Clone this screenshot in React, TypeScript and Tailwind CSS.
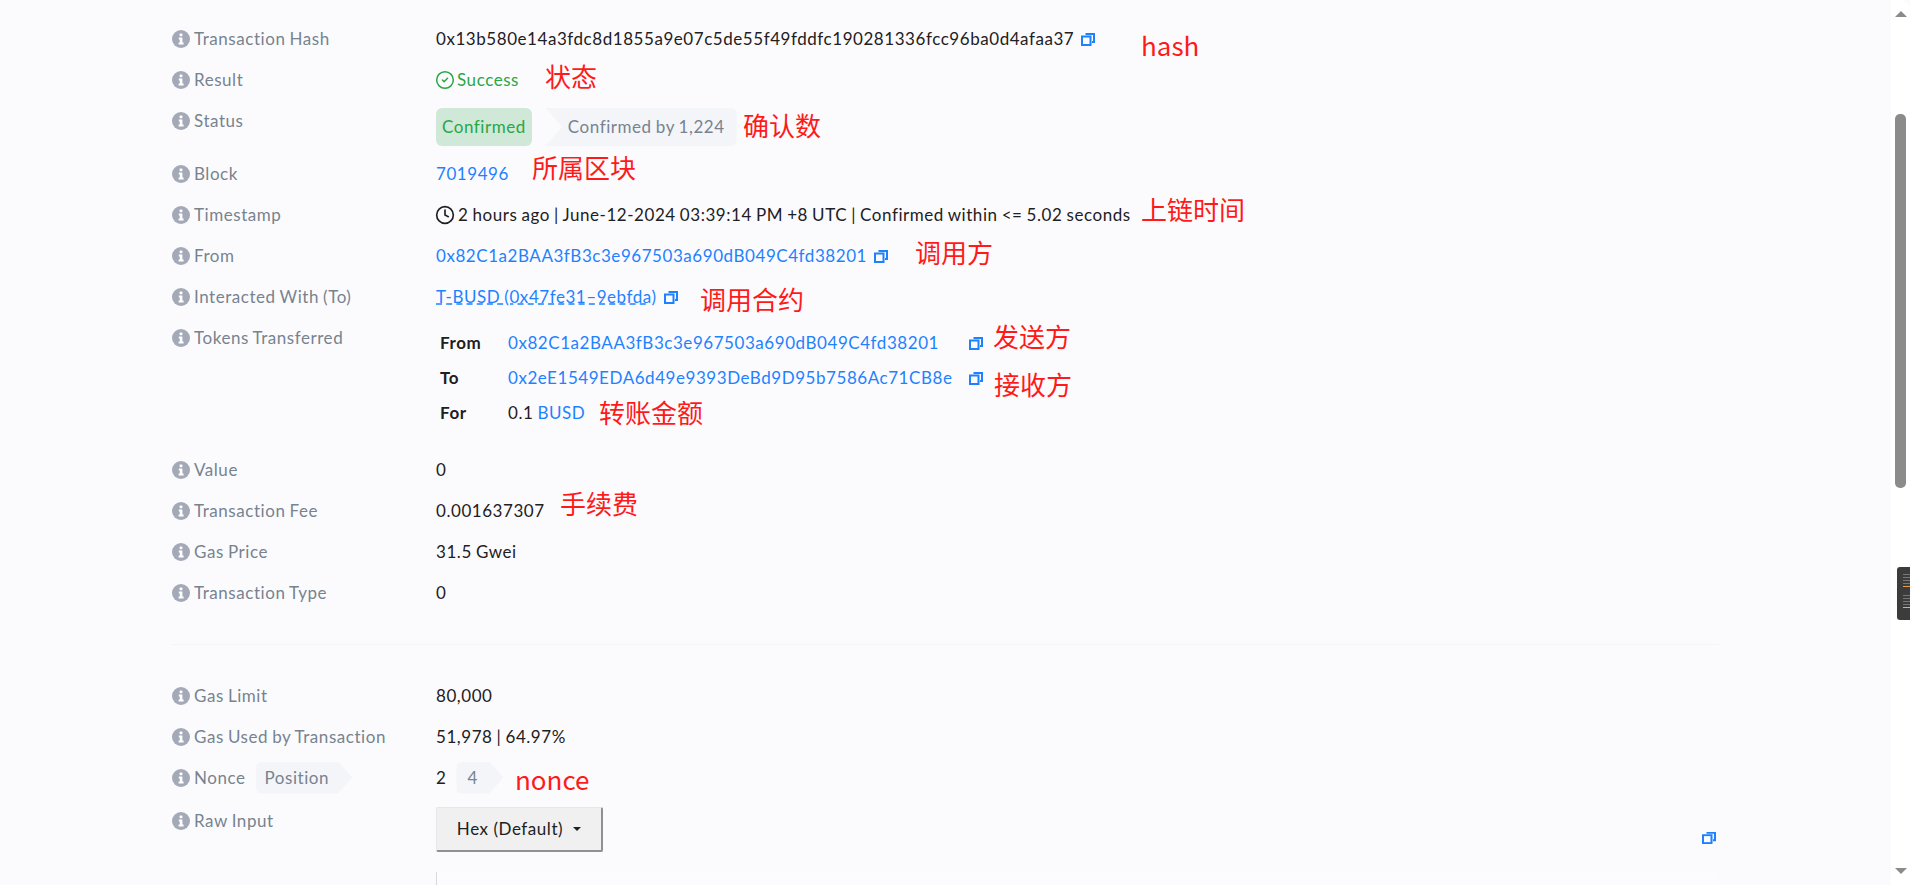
import { Clock, CircleCheck } from 'lucide-react'
import { ReactNode } from 'react'

const font = { fontFamily: 'Lato, "Noto Sans", sans-serif' }

function InfoIcon() {
  return (
    <svg viewBox="0 0 18 18" className="w-[18px] h-[18px] shrink-0">
      <circle cx="9" cy="9" r="9" fill="#a3a9b6" />
      <rect x="7.6" y="3.6" width="2.8" height="2.6" rx="0.6" fill="#fff" />
      <path d="M6.8 7.6h3.6v5h1.2v1.8H6.6v-1.8h1.2v-3.2h-1z" fill="#fff" />
    </svg>
  )
}

function CopyIcon({ className = 'w-[14px] h-[14px]' }: { className?: string }) {
  return (
    <svg viewBox="0 0 14 14" className={`${className} shrink-0`} fill="none" stroke="#1e82ff" strokeWidth="2" preserveAspectRatio="none">
      <path d="M4.5 2h8.5v8h-2" />
      <rect x="1" y="4.5" width="8.5" height="8.5" />
    </svg>
  )
}

function Row({ label, children, extra, className = 'h-[41px]' }: { label: string; children?: ReactNode; extra?: ReactNode; className?: string }) {
  return (
    <div className={`flex ${className}`}>
      <div className="w-[264px] h-[41px] flex items-center gap-[4px] text-[#77838f] shrink-0">
        <InfoIcon />
        <span>{label}</span>
        {extra}
      </div>
      <div className="flex-1 min-w-0">{children}</div>
    </div>
  )
}

function Value({ children }: { children: ReactNode }) {
  return <div className="h-[41px] flex items-center text-[#1e2022]">{children}</div>
}

function TokenRow({ label, children }: { label: string; children: ReactNode }) {
  return (
    <div className="flex items-center h-[35px] text-[#1e2022]">
      <span className="w-[72px] pl-[4px] font-bold">{label}</span>
      {children}
    </div>
  )
}

const notes = [
  { text: 'hash', cls: 'left-[1141px] top-[27px]' },
  { text: '状态', cls: 'left-[545px] top-[58px]' },
  { text: '确认数', cls: 'left-[743px] top-[107px]' },
  { text: '所属区块', cls: 'left-[532px] top-[149px]' },
  { text: '上链时间', cls: 'left-[1141px] top-[191px]' },
  { text: '调用方', cls: 'left-[915px] top-[234px]' },
  { text: '调用合约', cls: 'left-[700px] top-[281px]' },
  { text: '发送方', cls: 'left-[993px] top-[318px]' },
  { text: '接收方', cls: 'left-[994px] top-[366px]' },
  { text: '转账金额', cls: 'left-[599px] top-[394px]' },
  { text: '手续费', cls: 'left-[560px] top-[485px]' },
  { text: 'nonce', cls: 'left-[515px] top-[761px]' },
]

export default function App() {
  return (
    <div className="relative flex h-[885px] overflow-hidden bg-[#fbfbfe] text-[17px] tracking-[0.55px] [word-spacing:-0.8px]" style={font}>
      <main className="flex-1 min-w-0 pl-[172px] pr-[172px] pt-[18px]">
        <Row label="Transaction Hash">
          <Value>
            0x13b580e14a3fdc8d1855a9e07c5de55f49fddfc190281336fcc96ba0d4afaa37
            <span className="ml-[7px]"><CopyIcon /></span>
          </Value>
        </Row>
        <Row label="Result">
          <Value>
            <span className="flex items-center gap-[2px] -ml-[1px] text-[#28a745]">
              <CircleCheck className="w-[20px] h-[20px]" strokeWidth={1.8} />
              Success
            </span>
          </Value>
        </Row>
        <Row label="Status" className="h-[53px]">
          <div className="flex mt-[8px] h-[38px] items-center">
            <span className="h-full flex items-center px-[6px] rounded-[6px] bg-[#cfe8d8] text-[#28a745]">Confirmed</span>
            <span className="h-full ml-[14px] pl-[22px] pr-[12px] flex items-center rounded-r-[6px] bg-[#f4f5f9] text-[#77838f] [clip-path:polygon(0_0,100%_0,100%_100%,0_100%,16px_50%)]">Confirmed by 1,224</span>
          </div>
        </Row>
        <Row label="Block">
          <Value><a className="text-[#1e82ff]">7019496</a></Value>
        </Row>
        <Row label="Timestamp">
          <Value>
            <Clock className="w-[20px] h-[20px] mr-[3px] -ml-[1px]" strokeWidth={2} />
            2 hours ago | June-12-2024 03:39:14 PM +8 UTC | Confirmed within &lt;= 5.02 seconds
          </Value>
        </Row>
        <Row label="From">
          <Value>
            <a className="text-[#1e82ff]">0x82C1a2BAA3fB3c3e967503a690dB049C4fd38201</a>
            <span className="ml-[7px]"><CopyIcon /></span>
          </Value>
        </Row>
        <Row label="Interacted With (To)">
          <Value>
            <a className="text-[#1e82ff] underline decoration-dashed">T-BUSD (0x47fe31–9ebfda)</a>
            <span className="ml-[7px]"><CopyIcon /></span>
          </Value>
        </Row>
        <Row label="Tokens Transferred" className="h-[132px]">
          <div className="pt-[8px]">
            <TokenRow label="From">
              <a className="text-[#1e82ff] w-[461px]">0x82C1a2BAA3fB3c3e967503a690dB049C4fd38201</a>
              <CopyIcon />
            </TokenRow>
            <TokenRow label="To">
              <a className="text-[#1e82ff] w-[461px]">0x2eE1549EDA6d49e9393DeBd9D95b7586Ac71CB8e</a>
              <CopyIcon />
            </TokenRow>
            <TokenRow label="For">
              0.1&nbsp;<a className="text-[#1e82ff]">BUSD</a>
            </TokenRow>
          </div>
        </Row>
        <Row label="Value"><Value>0</Value></Row>
        <Row label="Transaction Fee"><Value>0.001637307</Value></Row>
        <Row label="Gas Price"><Value>31.5 Gwei</Value></Row>
        <Row label="Transaction Type"><Value>0</Value></Row>

        <hr className="mt-[31px] mb-[30px] border-t border-[#f3f4f7]" />

        <Row label="Gas Limit"><Value>80,000</Value></Row>
        <Row label="Gas Used by Transaction"><Value>51,978 | 64.97%</Value></Row>
        <Row
          label="Nonce"
          extra={
            <span className="ml-[6px] h-[32px] w-[97px] pl-[9px] flex items-center text-[#77838f] bg-[#f4f5f9] rounded-l-[6px] [clip-path:polygon(0_0,85%_0,100%_50%,85%_100%,0_100%)]">Position</span>
          }
        >
          <Value>
            2
            <span className="ml-[10px] h-[32px] w-[47px] pl-[11px] flex items-center text-[#77838f] bg-[#f4f5f9] rounded-l-[6px] [clip-path:polygon(0_0,70%_0,100%_50%,70%_100%,0_100%)]">4</span>
          </Value>
        </Row>
        <div className="mt-[2px]">
          <Row label="Raw Input" className="h-[90px]">
            <div className="flex justify-between items-end">
              <button className="mt-[7px] w-[167px] h-[45px] flex items-center justify-center gap-[10px] bg-[#f0f0f0] text-[#1e2022] border border-[#e4e6ec] border-r-2 border-b-2 border-r-[#8f9096] border-b-[#8f9096] rounded-[2px]">
                Hex (Default)
                <span className="w-0 h-0 border-x-[4px] border-x-transparent border-t-[4px] border-t-[#1e2022]" />
              </button>
              <CopyIcon className="w-[14px] h-[13px] mb-[8px] mr-[3px]" />
            </div>
            <div className="mt-[20px] h-[30px] border-l border-[#d5dae2] bg-[#fcfcfe]" />
          </Row>
        </div>
      </main>

      <aside className="w-[19px] shrink-0 bg-white flex flex-col items-center rounded-tr-[10px]">
        <span className="mt-[11px] w-0 h-0 border-x-[6px] border-x-transparent border-b-[6px] border-b-[#8b8b8b]" />
        <div className="mt-[97px] w-[11px] h-[374px] rounded-[5px] bg-[#8b8b8b]" />
        <div className="flex-1" />
        <span className="mb-[11px] w-0 h-0 border-x-[6px] border-x-transparent border-t-[6px] border-t-[#8b8b8b]" />
      </aside>

      {/* small dark widget sitting on the scrollbar */}
      <div className="absolute left-[1897px] top-[567px] w-[13px] h-[53px] rounded-l-[3px] bg-[#3c3c3c] flex flex-col gap-[2px] pl-[6px] pt-[7px]">
        <span className="h-[1px] bg-[#777]" />
        <span className="h-[1px] bg-[#777]" />
        <span className="h-[1px] bg-[#777]" />
        <span className="h-[1px] bg-[#777]" />
        <span className="h-[1px] bg-[#e8a04c]" />
        <span className="h-[1px] mt-[6px] bg-[#777]" />
        <span className="h-[1px] bg-[#777]" />
        <span className="h-[1px] bg-[#777]" />
        <span className="h-[1px] bg-[#777]" />
        <span className="h-[1px] bg-[#8fe04c]" />
      </div>

      {notes.map((n) => (
        <span
          key={n.text}
          className={`absolute ${n.cls} text-[26px] leading-[36px] tracking-normal text-[#ff1a1a]`}
          style={{ fontFamily: '"Noto Sans CJK SC", sans-serif' }}
        >
          {n.text}
        </span>
      ))}
    </div>
  )
}
